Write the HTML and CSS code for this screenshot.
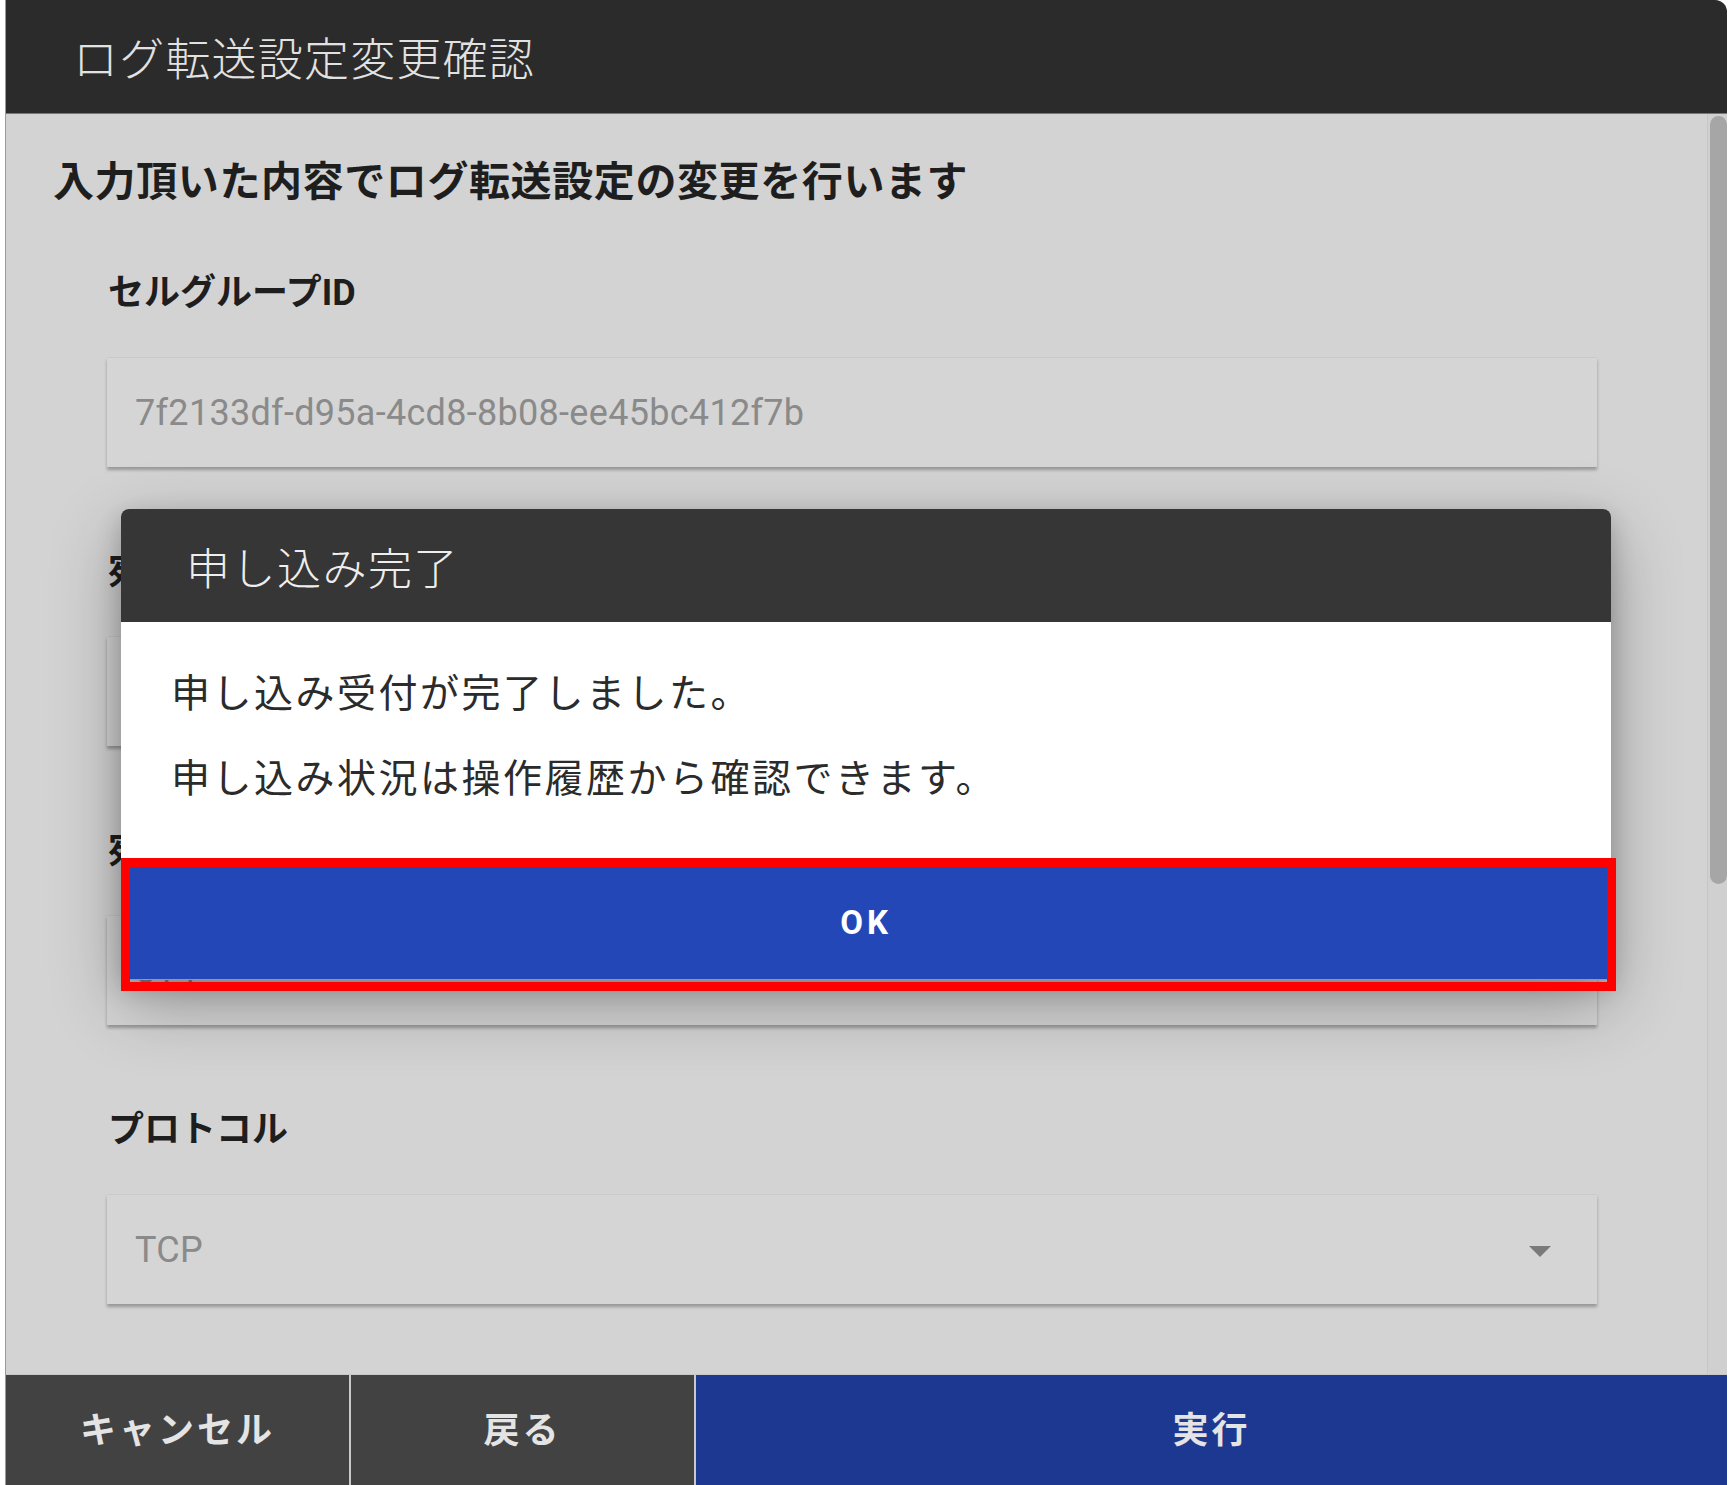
FILE: index.html
```html
<!DOCTYPE html>
<html lang="ja">
<head>
  <meta charset="UTF-8">
  <title>ログ転送設定変更確認</title>
  <link rel="stylesheet" href="styles.css">
</head>
<body>

  <!-- Confirm window -->
  <div class="window">
    <header class="win-head">ログ転送設定変更確認</header>

    <div class="win-body">
      <div class="content">
        <h2 class="lead">入力頂いた内容でログ転送設定の変更を行います</h2>

        <div class="field">
          <div class="field-label">セルグループID</div>
          <div class="field-box">7f2133df-d95a-4cd8-8b08-ee45bc412f7b</div>
        </div>

        <div class="field">
          <div class="field-label">宛先IPアドレス</div>
          <div class="field-box">192.168.10.25</div>
        </div>

        <div class="field">
          <div class="field-label">宛先ポート番号</div>
          <div class="field-box">514</div>
        </div>

        <div class="field">
          <div class="field-label">プロトコル</div>
          <div class="field-box select">
            <span>TCP</span>
            <span class="caret"></span>
          </div>
        </div>
      </div>

      <div class="scrollbar"><div class="thumb"></div></div>
    </div>

    <footer class="win-foot">
      <button class="foot-btn dark">キャンセル</button>
      <button class="foot-btn dark">戻る</button>
      <button class="foot-btn primary">実行</button>
    </footer>
  </div>

  <!-- Completion dialog -->
  <div class="modal">
    <div class="modal-head">申し込み完了</div>
    <div class="modal-body">
      <p>申し込み受付が完了しました。</p>
      <p>申し込み状況は操作履歴から確認できます。</p>
    </div>
    <button class="modal-ok">OK</button>
  </div>

  <!-- Annotation frame -->
  <div class="highlight"></div>

</body>
</html>
```

FILE: styles.css
```css
body {
  margin: 0;
  background: #ffffff;
  font-family: Roboto, "Noto Sans CJK JP", sans-serif;
  width: 1732px;
  height: 1485px;
  overflow: hidden;
  position: relative;
}

/* Window */
.window {
  margin-left: 5px;
  width: 1722px;
  height: 1485px;
  box-sizing: border-box;
  border-left: 1px solid #9a9a9a;
  display: flex;
  flex-direction: column;
  background: #d3d3d3;
  border-top-right-radius: 12px;
  overflow: hidden;
}

.win-head {
  height: 114px;
  flex: none;
  background: #2b2b2b;
  color: #e2e2e2;
  font-size: 45px;
  font-weight: 300;
  display: flex;
  align-items: center;
  padding-left: 67px;
  letter-spacing: 1.2px;
  border-bottom: 1px solid #777;
  box-sizing: border-box;
}

.win-body {
  flex: 1;
  display: flex;
  overflow: hidden;
}

.content {
  flex: 1;
  padding: 40px 0 0 47px;
  overflow: hidden;
}

.lead {
  margin: 0 0 61px;
  font-size: 41px;
  line-height: 56px;
  font-weight: bold;
  letter-spacing: 0.6px;
  color: #1e1e1e;
}

.field {
  margin: 0 110px 83px 54px;
}

.field-label {
  font-size: 36px;
  line-height: 44px;
  font-weight: bold;
  color: #1e1e1e;
  margin: 0 0 42px 1px;
}

.field-box {
  height: 110px;
  box-sizing: border-box;
  padding-left: 28px;
  display: flex;
  align-items: center;
  font-size: 36px;
  letter-spacing: 0.3px;
  color: #8a8a8a;
  background: #d5d5d5;
  border-top: 1px solid #cacaca;
  box-shadow: 0 3px 3px rgba(0, 0, 0, 0.28);
}

.field-box.select {
  justify-content: space-between;
  padding-right: 46px;
}

.caret {
  width: 0;
  height: 0;
  border-left: 11px solid transparent;
  border-right: 11px solid transparent;
  border-top: 11px solid #7a7a7a;
  margin-top: 4px;
}

/* Scrollbar */
.scrollbar {
  width: 20px;
  flex: none;
  background: #d0d0d0;
  border-left: 1px solid #c6c6c6;
  padding: 2px 0 0 2px;
  box-sizing: border-box;
}

.thumb {
  height: 768px;
  background: #a6a6a6;
  border-radius: 9px;
}

/* Footer */
.win-foot {
  height: 110px;
  flex: none;
  display: flex;
  border-top: 1px solid #c8c8c8;
}

.foot-btn {
  border: none;
  margin: 0;
  padding: 0 0 6px;
  font-family: "Noto Sans CJK JP", sans-serif;
  font-size: 36px;
  font-weight: bold;
  letter-spacing: 3px;
  color: #e4e4e4;
}

.foot-btn.dark {
  width: 345px;
  background: #424242;
  border-right: 2px solid #c9c9c9;
}

.foot-btn.primary {
  flex: 1;
  background: #1d3891;
}

/* Dialog */
.modal {
  position: absolute;
  left: 121px;
  top: 509px;
  width: 1490px;
  background: #ffffff;
  border-radius: 8px 8px 0 0;
  box-shadow: 0 24px 70px rgba(0, 0, 0, 0.3), 0 8px 24px rgba(0, 0, 0, 0.2);
}

.modal-head {
  height: 113px;
  background: #363636;
  border-radius: 8px 8px 0 0;
  color: #eeeeee;
  font-size: 44px;
  font-weight: 300;
  letter-spacing: 1.5px;
  display: flex;
  align-items: center;
  padding-left: 65px;
}

.modal-body {
  padding: 44px 0 60px 50px;
}

.modal-body p {
  margin: 0;
  font-size: 39px;
  line-height: 56px;
  letter-spacing: 2.5px;
  color: #2b2b2b;
}

.modal-body p + p {
  margin-top: 29px;
}

.modal-ok {
  display: block;
  width: 100%;
  height: 113px;
  border: none;
  padding: 0 0 2px;
  background: #2447b7;
  color: #ffffff;
  font-family: Roboto, sans-serif;
  font-size: 33px;
  font-weight: bold;
  letter-spacing: 4px;
  border-bottom: 1px solid #8a96c4;
}

.highlight {
  position: absolute;
  left: 121px;
  top: 858px;
  width: 1495px;
  height: 133px;
  box-sizing: border-box;
  border: 9px solid #ff0000;
}
```
